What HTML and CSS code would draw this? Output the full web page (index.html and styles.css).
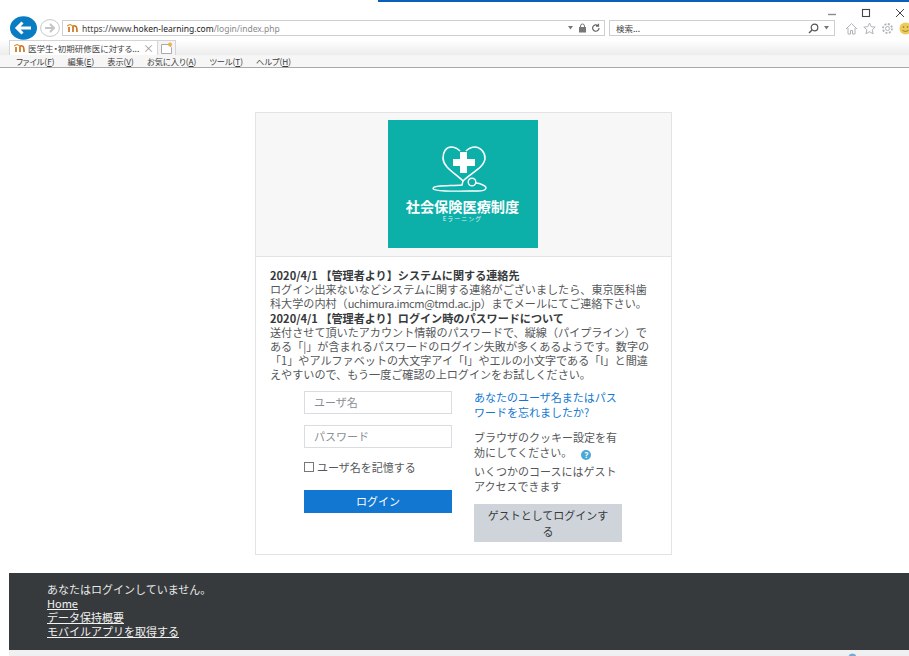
FILE: index.html
```html
<!DOCTYPE html>
<html lang="ja">
<head>
<meta charset="utf-8">
<title>社会保険医療制度 Eラーニング</title>
<link rel="stylesheet" href="styles.css">
</head>
<body>
<div class="browser">
  <div class="title-strip">
    <div class="accent-line"></div>
    <div class="win-controls">
      <svg width="12" height="12" viewBox="0 0 12 12"><path d="M2 7.500h8" stroke="#8a8a8a" stroke-width="1.400"/></svg>
      <svg width="12" height="12" viewBox="0 0 12 12"><rect x="2.500" y="2.500" width="7" height="7" fill="none" stroke="#444" stroke-width="1.100"/></svg>
      <svg width="12" height="12" viewBox="0 0 12 12"><path d="M2 2l8 8M10 2l-8 8" stroke="#444" stroke-width="1"/></svg>
    </div>
  </div>
  <div class="nav-row">
    <svg class="back" width="27" height="24" viewBox="0 0 27 24"><ellipse cx="13.500" cy="12" rx="13.500" ry="11.800" fill="#0a7cc4"/><path d="M7 12h14M12.500 6.500L7 12l5.500 5.500" fill="none" stroke="#fff" stroke-width="3"/></svg>
    <svg class="forward" width="20" height="18" viewBox="0 0 20 18"><ellipse cx="10" cy="9" rx="9.400" ry="8.400" fill="#fff" stroke="#c8c8c8"/><path d="M5 9h9M10 5l4 4-4 4" fill="none" stroke="#c4c4c4" stroke-width="2"/></svg>
    <div class="field url">
      <svg class="favicon" width="11" height="8" viewBox="0 0 11 8"><path d="M2 8V3M6 8V2.500c0-1 2-1 3 0 1 1 1 2 1 5.500" fill="none" stroke="#c9761f" stroke-width="1.700"/><path d="M0 2l3-1.500 3 1.500" fill="none" stroke="#e8913a" stroke-width="1.200"/></svg>
      <span class="url-text">https://www.<b>hoken-learning.com</b><i>/login/index.php</i></span>
      <span class="field-tools">
        <svg width="7" height="4" viewBox="0 0 7 4"><path d="M1 0h5L3.500 3.500z" fill="#777"/></svg>
        <svg width="9" height="10" viewBox="0 0 9 10"><rect x="1" y="4" width="7" height="5.500" fill="#777"/><path d="M2.500 4.500V3a2 2 0 0 1 4 0v1.500" fill="none" stroke="#777"/></svg>
        <svg width="10" height="10" viewBox="0 0 10 10"><path d="M8 5a3.200 3.200 0 1 1-1-2.300M7.500 0.800v2.400H5" fill="none" stroke="#666" stroke-width="1.200"/></svg>
      </span>
    </div>
    <div class="field search">
      <span class="search-text">検索...</span>
      <span class="field-tools">
        <svg width="11" height="11" viewBox="0 0 11 11"><circle cx="6.500" cy="4.500" r="3.300" fill="none" stroke="#555" stroke-width="1.200"/><path d="M4 7L1 10" stroke="#555" stroke-width="1.500"/></svg>
        <svg width="7" height="4" viewBox="0 0 7 4"><path d="M1 0h5L3.500 3.500z" fill="#777"/></svg>
      </span>
    </div>
    <div class="tool-icons">
      <svg width="13" height="13" viewBox="0 0 13 13"><path d="M1 7l5.500-5.500L12 7M3 6v6h2.500V8.500h2V12H10V6" fill="none" stroke="#aeb4b8"/></svg>
      <svg width="13" height="13" viewBox="0 0 13 13"><path d="M6.500 1l1.700 3.700 4 .4-3 2.700.9 4-3.600-2.100-3.600 2.100.9-4-3-2.700 4-.4z" fill="none" stroke="#aeb4b8"/></svg>
      <svg width="13" height="13" viewBox="0 0 13 13"><circle cx="6.500" cy="6.500" r="2" fill="none" stroke="#aeb4b8"/><circle cx="6.500" cy="6.500" r="4.500" fill="none" stroke="#aeb4b8" stroke-width="1.800" stroke-dasharray="2 1.500"/></svg>
      <svg width="13" height="13" viewBox="0 0 13 13"><circle cx="6.500" cy="6.500" r="6" fill="#eccb5a"/><circle cx="4.500" cy="5" r=".8" fill="#8a7320"/><circle cx="8.500" cy="5" r=".8" fill="#8a7320"/><path d="M3.500 8.500q3 2 6 0" fill="none" stroke="#8a7320" stroke-width=".8"/></svg>
    </div>
  </div>
  <div class="tab-row">
    <div class="tab">
      <svg width="11" height="8" viewBox="0 0 11 8"><path d="M2 8V3M6 8V2.500c0-1 2-1 3 0 1 1 1 2 1 5.500" fill="none" stroke="#c9761f" stroke-width="1.700"/><path d="M0 2l3-1.500 3 1.500" fill="none" stroke="#e8913a" stroke-width="1.200"/></svg>
      <span class="tab-title">医学生・初期研修医に対する...</span>
      <span class="tab-close">×</span>
    </div>
    <div class="new-tab">
      <svg width="13" height="13" viewBox="0 0 13 13"><path d="M1.500 2.500h7l3 3v6h-10z" fill="#fff" stroke="#aaa"/><circle cx="10" cy="2.500" r="2" fill="#eeb04a"/></svg>
    </div>
  </div>
  <nav class="menu-row">
    <span>ファイル(<u>F</u>)</span>
    <span>編集(<u>E</u>)</span>
    <span>表示(<u>V</u>)</span>
    <span>お気に入り(<u>A</u>)</span>
    <span>ツール(<u>T</u>)</span>
    <span>ヘルプ(<u>H</u>)</span>
  </nav>
</div>

<main class="page">
  <section class="card">
    <header class="card-logo">
      <div class="logo">
        <svg width="70" height="52" viewBox="0 0 70 52">
          <path d="M32 9C29 6 26 5 23 5 18 5 15 10 15 16 15 25 27 31 35 39 43 31 57 25 57 16 57 10 52 5 47 5 44 5 41 6 38 9" fill="none" stroke="#fff" stroke-width="1.600"/>
          <path d="M32 10h7v7h8v7h-8v7h-7v-7h-7v-7h7z" fill="#fff"/>
          <circle cx="44" cy="40" r="3.800" fill="none" stroke="#fff" stroke-width="1.400"/>
          <path d="M35 39l-1 4C22 44 5 43 5 46.500 5 50 35 49 50 49c9 0 10-4 5-6-2-1-5-2-7-2" fill="none" stroke="#fff" stroke-width="1.400"/>
        </svg>
        <div class="logo-title">社会保険医療制度</div>
        <div class="logo-sub">Eラーニング</div>
      </div>
    </header>
    <div class="card-body">
      <div class="notice">
        <p><b>2020/4/1 【管理者より】システムに関する連絡先</b></p>
        <p>ログイン出来ないなどシステムに関する連絡がございましたら、東京医科歯科大学の内村（<span class="mail">uchimura.imcm@tmd.ac.jp</span>）までメールにてご連絡下さい。</p>
        <p><b>2020/4/1 【管理者より】ログイン時のパスワードについて</b></p>
        <p>送付させて頂いたアカウント情報のパスワードで、縦線（パイプライン）である「|」が含まれるパスワードのログイン失敗が多くあるようです。数字の「1」やアルファベットの大文字アイ「I」やエルの小文字である「l」と間違えやすいので、もう一度ご確認の上ログインをお試しください。</p>
      </div>
      <div class="login-grid">
        <form class="login-form">
          <input class="text-input" type="text" placeholder="ユーザ名">
          <input class="text-input" type="password" placeholder="パスワード">
          <label class="remember"><span class="checkbox"></span>ユーザ名を記憶する</label>
          <button class="btn-login" type="button">ログイン</button>
        </form>
        <div class="login-side">
          <a class="forgot" href="#">あなたのユーザ名またはパスワードを忘れましたか?</a>
          <p class="cookie">ブラウザのクッキー設定を有効にしてください。<span class="help">?</span></p>
          <p class="guest-note">いくつかのコースにはゲストアクセスできます</p>
          <button class="btn-guest" type="button">ゲストとしてログインする</button>
        </div>
      </div>
    </div>
  </section>
</main>

<footer class="site-footer">
  <p>あなたはログインしていません。</p>
  <a href="#">Home</a>
  <a href="#">データ保持概要</a>
  <a href="#">モバイルアプリを取得する</a>
</footer>
<div class="status-row">
  <svg width="9" height="9" viewBox="0 0 9 9"><circle cx="4.500" cy="4.500" r="4" fill="#7aa7d8"/></svg>
  <span>100%</span>
</div>
</body>
</html>
```
FILE: styles.css
```css
html, body {
  margin: 0;
  height: 656px;
  overflow: hidden;
  background: #fff;
  font-family: "Noto Sans CJK JP", "Noto Sans", sans-serif;
  color: #373a3c;
}

/* Browser frame */
.browser {
  height: 68px;
  border-bottom: 1px solid #a8a8a8;
  box-sizing: border-box;
  display: flex;
  flex-direction: column;
  font-size: 8px;
  color: #444;
  font-feature-settings: "palt";
}
.title-strip {
  height: 17px;
  position: relative;
}
.accent-line {
  position: absolute;
  top: 0;
  right: 0;
  left: 378px;
  height: 2px;
  background: #0b5fb8;
}
.win-controls {
  position: absolute;
  top: 7px;
  right: 3px;
  display: flex;
  gap: 22px;
}
.nav-row {
  height: 24px;
  display: flex;
  align-items: center;
  padding-left: 10px;
  margin-top: -1px;
}
.back { flex: none; }
.forward { flex: none; margin: 0 0 0 3px; }
.field {
  box-sizing: border-box;
  height: 16px;
  border: 1px solid #cfcfcf;
  display: flex;
  align-items: center;
  background: #fff;
  flex: none;
}
.url {
  width: 543px;
  margin-left: 2px;
  padding: 0 3px 0 4px;
}
.favicon { margin-right: 4px; }
.url-text {
  font-family: "Noto Sans", sans-serif;
  font-size: 8.500px;
  color: #444;
}
.url-text b { font-weight: 400; color: #222; }
.url-text i { font-style: normal; color: #8a8a8a; }
.field-tools {
  margin-left: auto;
  display: flex;
  align-items: center;
  gap: 4px;
}
.search {
  width: 226px;
  margin-left: 4px;
  padding: 0 4px 0 6px;
}
.search-text { font-size: 8.500px; }
.tool-icons {
  display: flex;
  gap: 5px;
  margin-left: 10px;
  flex: none;
}
.tab-row {
  height: 15px;
  display: flex;
  align-items: flex-end;
  padding-left: 9px;
  background: linear-gradient(#ffffff, #ececec);
  flex: none;
}
.tab {
  box-sizing: border-box;
  width: 149px;
  height: 15px;
  background: #fff;
  border: 1px solid #d4d4d4;
  border-bottom: 0;
  display: flex;
  align-items: center;
  padding: 0 3px 0 4px;
  gap: 3px;
  font-size: 8.500px;
}
.tab-title { white-space: nowrap; }
.tab-close { margin-left: auto; font-size: 11px; color: #999; line-height: 1; }
.new-tab {
  box-sizing: border-box;
  width: 18px;
  height: 15px;
  border: 1px solid #d4d4d4;
  border-bottom: 0;
  border-left: 0;
  display: flex;
  align-items: center;
  justify-content: center;
  background: #f4f4f4;
}
.menu-row {
  flex: 1;
  background: #f6f6f6;
  display: flex;
  align-items: center;
  gap: 13px;
  padding-left: 16px;
  font-size: 8.200px;
  color: #3c3c3c;
}

/* Login card */
.page {
  height: 505px;
  padding: 44px 0 0 255px;
  box-sizing: border-box;
}
.card {
  box-sizing: border-box;
  width: 417px;
  height: 443px;
  border: 1px solid #e3e3e3;
  display: flex;
  flex-direction: column;
}
.card-logo {
  height: 144px;
  box-sizing: border-box;
  flex: none;
  background: #f7f7f7;
  border-bottom: 1px solid #e3e3e3;
  display: flex;
  justify-content: center;
  padding: 7px 2px 0 0;
}
.logo {
  width: 150px;
  height: 128px;
  background: #0cb0a9;
  color: #fff;
  display: flex;
  flex-direction: column;
  align-items: center;
  padding-top: 22px;
  box-sizing: border-box;
}
.logo-title {
  font-size: 14.200px;
  font-weight: 700;
  line-height: 16px;
  margin-top: 4px;
  white-space: nowrap;
}
.logo-sub {
  font-size: 6px;
  line-height: 9px;
  letter-spacing: 1px;
  opacity: .85;
}
.card-body {
  flex: 1;
  padding: 11px 18px 0 14px;
}
.notice {
  font-size: 11.100px;
  line-height: 14.200px;
  color: #55585a;
}
.notice p { margin: 0; }
.notice b { color: #373a3c; }
.mail { letter-spacing: -.4px; }

.login-grid {
  display: flex;
  margin-top: 9px;
  padding-left: 34px;
  gap: 22px;
}
.login-form {
  width: 148px;
  display: flex;
  flex-direction: column;
  flex: none;
}
.text-input {
  box-sizing: border-box;
  width: 148px;
  height: 23px;
  border: 1px solid #d9dce0;
  padding: 0 9px;
  margin-bottom: 11px;
  font: 11px "Noto Sans CJK JP", sans-serif;
  outline: 0;
}
.text-input::placeholder { color: #8b8f93; }
.remember {
  display: flex;
  align-items: center;
  gap: 3px;
  font-size: 11px;
  line-height: 16px;
  color: #55585a;
}
.checkbox {
  width: 8px;
  height: 8px;
  border: 1px solid #777;
  display: block;
}
.btn-login {
  width: 148px;
  height: 23px;
  margin-top: 15px;
  border: 0;
  background: #1177d1;
  color: #fff;
  font: 11px "Noto Sans CJK JP", sans-serif;
  padding: 0;
}
.login-side {
  width: 148px;
  font-size: 11px;
  line-height: 15px;
  color: #55585a;
  margin-top: -1px;
}
.forgot { color: #1177d1; text-decoration: none; display: block; }
.cookie { margin: 10px 0 0; }
.help {
  display: inline-flex;
  width: 10px;
  height: 10px;
  margin-left: 9px;
  border-radius: 50%;
  background: #4aa8d8;
  color: #fff;
  font: 700 8px/10px "Noto Sans", sans-serif;
  align-items: center;
  justify-content: center;
  vertical-align: -1px;
}
.guest-note { margin: 4px 0 0; }
.btn-guest {
  display: block;
  width: 148px;
  height: 38px;
  margin-top: 10px;
  border: 0;
  padding: 0 10px;
  background: #ced4da;
  color: #373a3c;
  font: 11px/16px "Noto Sans CJK JP", sans-serif;
}

/* Footer */
.site-footer {
  box-sizing: border-box;
  height: 77px;
  margin-left: 9px;
  padding: 9px 38px 0;
  background: #373a3c;
  color: #e8e8e8;
  font-size: 11px;
  line-height: 14px;
}
.site-footer p { margin: 0; }
.site-footer a { display: block; color: #f2f2f2; }
.status-row {
  box-sizing: border-box;
  height: 6px;
  margin-left: 9px;
  padding: 3px 27px 0 0;
  background: #f0f0f0;
  display: flex;
  justify-content: flex-end;
  gap: 4px;
  font-size: 8px;
  line-height: 12px;
  color: #555;
  overflow: hidden;
}
```
